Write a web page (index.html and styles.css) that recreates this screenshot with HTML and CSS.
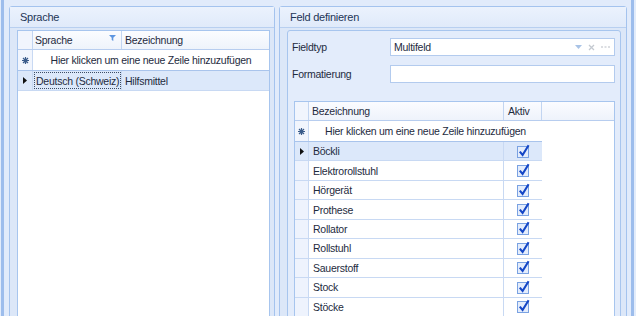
FILE: index.html
```html
<!DOCTYPE html>
<html lang="de">
<head>
<meta charset="utf-8">
<title>Feld definieren</title>
<link rel="stylesheet" href="styles.css">
</head>
<body>
<div class="frame">
	<section class="panel panel-left">
		<div class="panel-head">Sprache</div>
		<div class="panel-body">
			<div class="grid grid-lang">
				<div class="row head">
					<div class="cell ind"></div>
					<div class="cell c-lang">Sprache
						<svg class="filter" width="7" height="6" viewBox="0 0 7 6"><path d="M0 0H7L4.3 2.8V6L2.7 5V2.8Z" fill="#5d96e0"/></svg>
					</div>
					<div class="cell c-fill">Bezeichnung</div>
				</div>
				<div class="row new-row">
					<div class="cell ind">
						<svg width="9" height="9" viewBox="0 0 9 9"><path d="M4.5 1V8M1 4.5H8M2 2L7 7M7 2L2 7" stroke="#3a5b8a" stroke-width="1.2"/></svg>
					</div>
					<div class="cell new-text">Hier klicken um eine neue Zeile hinzuzufügen</div>
				</div>
				<div class="row sel">
					<div class="cell ind">
						<svg width="4" height="7" viewBox="0 0 4 7"><path d="M0 0L4 3.5L0 7Z" fill="#111"/></svg>
					</div>
					<div class="cell c-lang"><span class="focus">Deutsch (Schweiz)</span></div>
					<div class="cell c-fill">Hilfsmittel</div>
				</div>
			</div>
		</div>
	</section>

	<section class="panel panel-right">
		<div class="panel-head">Feld definieren</div>
		<div class="panel-body">
			<div class="group">
				<div class="field">
					<label>Fieldtyp</label>
					<div class="input combo">
						<span>Multifeld</span>
						<span class="btns">
							<svg width="7" height="4" viewBox="0 0 7 4"><path d="M0 0H7L3.5 4Z" fill="#a9c3e6"/></svg>
							<svg width="7" height="7" viewBox="0 0 7 7"><path d="M1 1L6 6M6 1L1 6" stroke="#c4c9d0" stroke-width="1.3"/></svg>
							<svg width="9" height="3" viewBox="0 0 9 3"><path d="M0 1H2M3.5 1H5.5M7 1H9" stroke="#b9bec6" stroke-width="1.2"/></svg>
						</span>
					</div>
				</div>
				<div class="field">
					<label>Formatierung</label>
					<div class="input"></div>
				</div>

				<div class="grid grid-items">
					<div class="row head">
						<div class="cell ind"></div>
						<div class="cell c-name">Bezeichnung</div>
						<div class="cell c-act">Aktiv</div>
						<div class="cell c-fill"></div>
					</div>
					<div class="row new-row">
						<div class="cell ind">
							<svg width="9" height="9" viewBox="0 0 9 9"><path d="M4.5 1V8M1 4.5H8M2 2L7 7M7 2L2 7" stroke="#3a5b8a" stroke-width="1.2"/></svg>
						</div>
						<div class="cell new-text">Hier klicken um eine neue Zeile hinzuzufügen</div>
					</div>
					<div class="row item sel">
						<div class="cell ind"><svg width="4" height="7" viewBox="0 0 4 7"><path d="M0 0L4 3.5L0 7Z" fill="#111"/></svg></div>
						<div class="cell c-name">Böckli</div>
						<div class="cell c-act"><svg class="check" width="15" height="15" viewBox="0 0 15 15"><rect x="1.5" y="2.5" width="11" height="11" fill="#e4edfc" stroke="#7aa2e2"/><path d="M3.8 7.6L6.6 11L12.6 1.3" fill="none" stroke="#1446c6" stroke-width="2.1"/></svg></div>
					</div>
					<div class="row item">
						<div class="cell ind"></div>
						<div class="cell c-name">Elektrorollstuhl</div>
						<div class="cell c-act"><svg class="check" width="15" height="15" viewBox="0 0 15 15"><rect x="1.5" y="2.5" width="11" height="11" fill="#e4edfc" stroke="#7aa2e2"/><path d="M3.8 7.6L6.6 11L12.6 1.3" fill="none" stroke="#1446c6" stroke-width="2.1"/></svg></div>
					</div>
					<div class="row item">
						<div class="cell ind"></div>
						<div class="cell c-name">Hörgerät</div>
						<div class="cell c-act"><svg class="check" width="15" height="15" viewBox="0 0 15 15"><rect x="1.5" y="2.5" width="11" height="11" fill="#e4edfc" stroke="#7aa2e2"/><path d="M3.8 7.6L6.6 11L12.6 1.3" fill="none" stroke="#1446c6" stroke-width="2.1"/></svg></div>
					</div>
					<div class="row item">
						<div class="cell ind"></div>
						<div class="cell c-name">Prothese</div>
						<div class="cell c-act"><svg class="check" width="15" height="15" viewBox="0 0 15 15"><rect x="1.5" y="2.5" width="11" height="11" fill="#e4edfc" stroke="#7aa2e2"/><path d="M3.8 7.6L6.6 11L12.6 1.3" fill="none" stroke="#1446c6" stroke-width="2.1"/></svg></div>
					</div>
					<div class="row item">
						<div class="cell ind"></div>
						<div class="cell c-name">Rollator</div>
						<div class="cell c-act"><svg class="check" width="15" height="15" viewBox="0 0 15 15"><rect x="1.5" y="2.5" width="11" height="11" fill="#e4edfc" stroke="#7aa2e2"/><path d="M3.8 7.6L6.6 11L12.6 1.3" fill="none" stroke="#1446c6" stroke-width="2.1"/></svg></div>
					</div>
					<div class="row item">
						<div class="cell ind"></div>
						<div class="cell c-name">Rollstuhl</div>
						<div class="cell c-act"><svg class="check" width="15" height="15" viewBox="0 0 15 15"><rect x="1.5" y="2.5" width="11" height="11" fill="#e4edfc" stroke="#7aa2e2"/><path d="M3.8 7.6L6.6 11L12.6 1.3" fill="none" stroke="#1446c6" stroke-width="2.1"/></svg></div>
					</div>
					<div class="row item">
						<div class="cell ind"></div>
						<div class="cell c-name">Sauerstoff</div>
						<div class="cell c-act"><svg class="check" width="15" height="15" viewBox="0 0 15 15"><rect x="1.5" y="2.5" width="11" height="11" fill="#e4edfc" stroke="#7aa2e2"/><path d="M3.8 7.6L6.6 11L12.6 1.3" fill="none" stroke="#1446c6" stroke-width="2.1"/></svg></div>
					</div>
					<div class="row item">
						<div class="cell ind"></div>
						<div class="cell c-name">Stock</div>
						<div class="cell c-act"><svg class="check" width="15" height="15" viewBox="0 0 15 15"><rect x="1.5" y="2.5" width="11" height="11" fill="#e4edfc" stroke="#7aa2e2"/><path d="M3.8 7.6L6.6 11L12.6 1.3" fill="none" stroke="#1446c6" stroke-width="2.1"/></svg></div>
					</div>
					<div class="row item">
						<div class="cell ind"></div>
						<div class="cell c-name">Stöcke</div>
						<div class="cell c-act"><svg class="check" width="15" height="15" viewBox="0 0 15 15"><rect x="1.5" y="2.5" width="11" height="11" fill="#e4edfc" stroke="#7aa2e2"/><path d="M3.8 7.6L6.6 11L12.6 1.3" fill="none" stroke="#1446c6" stroke-width="2.1"/></svg></div>
					</div>
				</div>
			</div>
		</div>
	</section>
</div>
</body>
</html>
```

FILE: styles.css
```css
* { margin: 0; padding: 0; box-sizing: border-box; }
html, body { height: 100%; overflow: hidden; }
body { background: #e2ecfb; font-family: "Liberation Sans", Arial, sans-serif; font-size: 10.5px; letter-spacing: -0.25px; color: #1e2b3e; }

.frame { display: flex; gap: 4px; height: 380px; margin: 0 2px 0 1px; padding: 6px 4px 0 5px; border-left: 3px solid #9dbdec; border-right: 3px solid #9dbdec; background: #e1ebfb; }

.panel { display: flex; flex-direction: column; border: 1px solid #a4c3ee; border-radius: 3px 3px 0 0; background: #dce7f8; }
.panel-left { width: 266px; }
.panel-right { flex: 1; }
.panel-head { height: 21px; padding: 4px 0 0 10px; border-bottom: 1px solid #b8cff0; background: linear-gradient(#ebf2fd, #e0eafa); font-size: 11px; color: #1d3557; }
.panel-body { flex: 1; display: flex; flex-direction: column; padding: 2px 4px 0 7px; }
.panel-right .panel-body { padding-right: 5px; }

/* grid */
.grid { flex: 1; display: flex; flex-direction: column; border: 1px solid #a7c5ee; background: #fff; }
.row { display: flex; border-bottom: 1px solid #c8d9f3; }
.cell { display: flex; align-items: center; border-right: 1px solid #c8d9f3; white-space: nowrap; overflow: hidden; }
.cell:last-child { border-right: none; }
.head { height: 19px; background: linear-gradient(#fbfcff, #eef3fb); border-bottom-color: #b7cdef; }
.head .cell { border-right-color: #c2d5f1; }
.ind { justify-content: center; background: #f1f5fd; }
.new-row { height: 21px; border-bottom: 1px solid #a9c4ec; }
.new-text { flex: 1; justify-content: center; }
.sel { background: #dce8fa; }
.sel .ind { background: #dce8fa; }

.grid-lang .ind { width: 15px; }
.grid-lang .c-lang { width: 89px; padding-left: 2px; position: relative; }
.grid-lang .c-fill { flex: 1; padding-left: 3px; }
.grid-lang .sel { height: 20px; }
.grid-lang .sel .c-lang { padding: 1px 0 1px 1px; }
.filter { position: absolute; right: 5px; top: 4px; }
.focus { display: flex; align-items: center; height: 100%; width: 100%; padding-left: 1px; border: 1px dotted #3c4d66; }

/* right side */
.group { flex: 1; display: flex; flex-direction: column; padding: 7px 5px 0 4px; border: 1px solid #a7c5ee; border-radius: 3px 3px 0 0; background: #e3ecfb; }
.field { display: flex; align-items: center; margin-bottom: 9px; }
.field label { width: 98px; }
.input { width: 225px; height: 18px; display: flex; align-items: center; justify-content: space-between; padding: 0 4px 0 3px; border: 1px solid #b3cbee; background: #fff; }
.btns { display: flex; align-items: center; gap: 6px; }

.grid-items { margin: 9px 0 0 2px; }
.grid-items .head { height: 19px; }
.grid-items .ind { width: 14px; }
.grid-items .c-name { width: 195px; padding-left: 3px; }
.grid-items .c-act { width: 38px; padding-left: 4px; }
.grid-items .c-fill { flex: 1; }
.grid-items .new-row { width: 247px; height: 21px; }
.grid-items .item { width: 247px; height: 19.45px; }
.grid-items .item .c-name { padding-left: 4px; }
.grid-items .item .c-act { justify-content: center; padding-left: 0; }
.grid-items .item .ind { background: #eef3fd; }
.grid-items .item.sel .ind { background: #dce8fa; }
```
